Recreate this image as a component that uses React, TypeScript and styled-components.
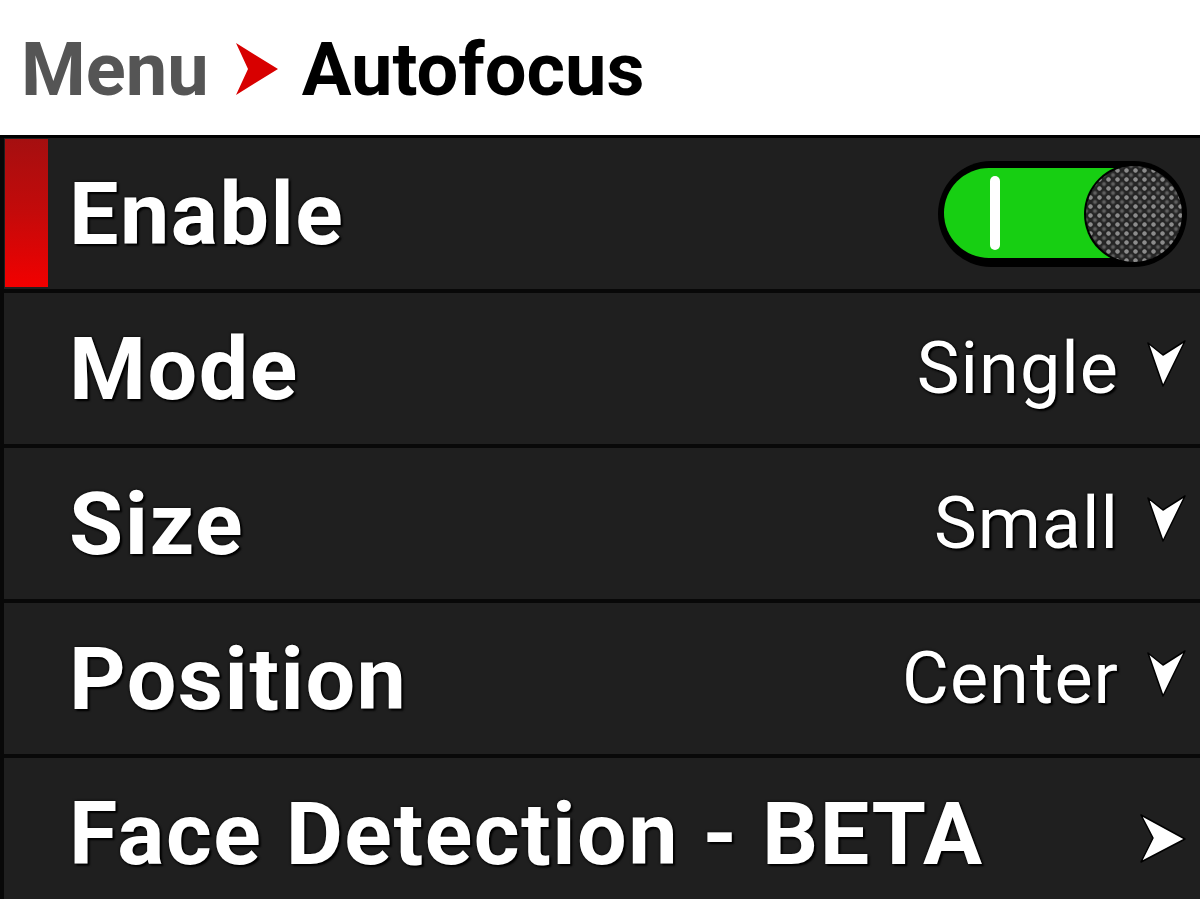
import React from 'react';
import styled, { createGlobalStyle } from 'styled-components';

const GlobalStyle = createGlobalStyle`
  html, body {
    margin: 0;
    padding: 0;
    height: 100%;
    overflow: hidden;
    background: #080808;
  }
  body {
    font-family: Roboto, "Liberation Sans", sans-serif;
  }
`;

const Screen = styled.div`
  width: 1200px;
  height: 899px;
  display: flex;
  flex-direction: column;
  background: #080808;
`;

const Header = styled.div`
  height: 135px;
  flex-shrink: 0;
  background: #fff;
  border-bottom: 3px solid #000;
  display: flex;
  align-items: center;
  padding-left: 21px;
  font-size: 74px;
  font-weight: 700;
`;

const Crumb = styled.span<{ current?: boolean }>`
  color: ${({ current }) => (current ? '#000' : '#555')};
  line-height: 1;
  margin-top: 4px;
`;

const List = styled.div`
  display: flex;
  flex-direction: column;
  gap: 4px;
  padding-left: 4px;
`;

const Row = styled.div`
  height: 151px;
  flex-shrink: 0;
  display: flex;
  align-items: center;
  background: #1f1f1f;
  padding-right: 13px;
`;

const Marker = styled.div<{ active?: boolean }>`
  align-self: stretch;
  width: 43px;
  margin: 1px 0 2px 1px;
  background: ${({ active }) =>
    active ? 'linear-gradient(180deg, #a50f10 0%, #c40a0a 50%, #f20000 100%)' : 'transparent'};
`;

const Label = styled.span`
  flex: 1;
  margin-left: 21px;
  color: #fff;
  font-size: 88px;
  font-weight: 700;
  letter-spacing: 1.5px;
  line-height: 1;
  text-shadow: 0 0 3px #000, 2px 2px 2px #000;
`;

const Value = styled.span`
  color: #fff;
  font-size: 72px;
  font-weight: 400;
  letter-spacing: 1px;
  line-height: 1;
  text-shadow: 0 0 3px #000, 2px 2px 2px #000;
  margin-right: 28px;
`;

const Toggle = styled.div`
  position: relative;
  width: 249px;
  height: 106px;
  border-radius: 53px;
  background: #000;
`;

const Track = styled.div`
  position: absolute;
  left: 6px;
  top: 7px;
  width: 190px;
  height: 90px;
  border-radius: 45px 0 0 45px;
  background: #17cf12;
`;

const OnMark = styled.div`
  position: absolute;
  left: 46px;
  top: 8px;
  width: 10px;
  height: 74px;
  border-radius: 5px;
  background: #fff;
`;

const Knob = styled.div`
  position: absolute;
  right: 5px;
  top: 5px;
  width: 96px;
  height: 96px;
  border-radius: 50%;
  background:
    radial-gradient(circle, #8c8c8c 1.8px, transparent 2.6px) 0 0 / 9px 9px,
    radial-gradient(circle, #5e5e5e 1.6px, transparent 2.4px) 4.5px 4.5px / 9px 9px,
    #252525;
  box-shadow: 0 0 0 2px #000;
`;

const ChevronDown = () => (
  <svg width="40" height="48" viewBox="0 0 40 48" style={{ marginTop: -10 }}>
    <polygon points="1,3 16,15 38,1 16,46" fill="#fff" stroke="#000" strokeWidth="1.5" strokeLinejoin="round" />
  </svg>
);

const ChevronRight = () => (
  <svg width="48" height="50" viewBox="0 0 48 50" style={{ marginTop: 10 }}>
    <polygon points="2,1 46,25 2,48 14,24" fill="#fff" stroke="#000" strokeWidth="1.5" strokeLinejoin="round" />
  </svg>
);

const RedArrow = () => (
  <svg width="46" height="52" viewBox="0 0 46 52" style={{ margin: '2px 22px 0 25px' }}>
    <polygon points="2,0 44,26 2,52 14,26" fill="#d80000" />
  </svg>
);

const items = [
  { label: 'Mode', value: 'Single' },
  { label: 'Size', value: 'Small' },
  { label: 'Position', value: 'Center' },
];

export default function App() {
  return (
    <>
      <GlobalStyle />
      <Screen>
        <Header>
          <Crumb>Menu</Crumb>
          <RedArrow />
          <Crumb current>Autofocus</Crumb>
        </Header>
        <List>
          <Row>
            <Marker active />
            <Label>Enable</Label>
            <Toggle>
              <Track>
                <OnMark />
              </Track>
              <Knob />
            </Toggle>
          </Row>
          {items.map((it) => (
            <Row key={it.label}>
              <Marker />
              <Label>{it.label}</Label>
              <Value>{it.value}</Value>
              <ChevronDown />
            </Row>
          ))}
          <Row>
            <Marker />
            <Label>Face Detection - BETA</Label>
            <ChevronRight />
          </Row>
        </List>
      </Screen>
    </>
  );
}
